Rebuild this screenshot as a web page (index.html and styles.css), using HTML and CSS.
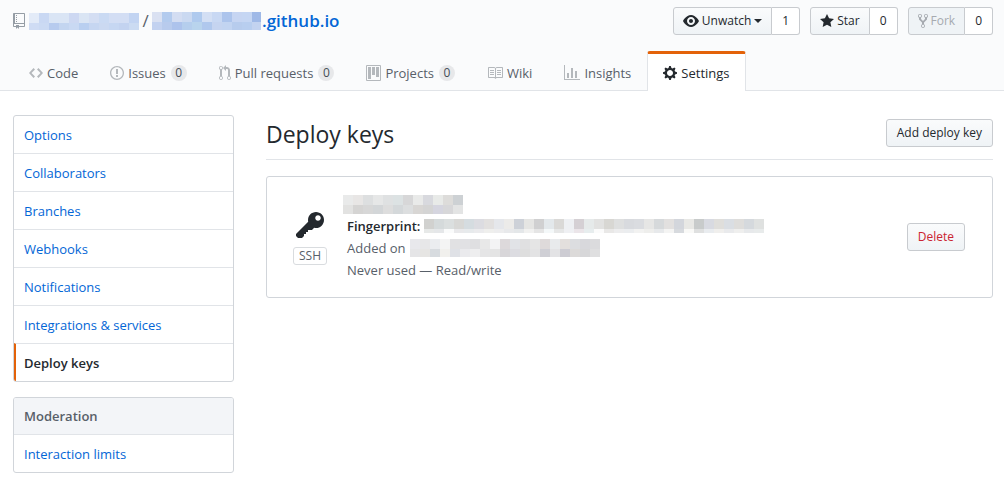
FILE: index.html
```html
<!DOCTYPE html>
<html lang="en">
<head>
<meta charset="utf-8">
<meta name="viewport" content="width=device-width, initial-scale=1">
<title>Deploy keys</title>
<link rel="stylesheet" href="styles.css">
</head>
<body>
<header class="repo-head">
  <div class="repo-bar">
    <h1 class="repo-title">
      <svg class="icon repo-icon" width="12" height="16" viewBox="0 0 12 16"><path fill-rule="evenodd" d="M4 9H3V8h1v1zm0-3H3v1h1V6zm0-2H3v1h1V4zm0-2H3v1h1V2zm8-1v12c0 .55-.45 1-1 1H6v2l-1.5-1.5L3 16v-2H1c-.55 0-1-.45-1-1V1c0-.55.45-1 1-1h10c.55 0 1 .45 1 1zm-1 10H1v2h2v-1h3v1h5v-2zm0-10H2v9h9V1z"/></svg>
      <svg class="mosaic" data-mosaic="owner" width="110" height="17"></svg>
      <span class="slash">/</span>
      <a class="repo-link" href="#"><svg class="mosaic" data-mosaic="repo" width="109" height="18"></svg><span>.github.io</span></a>
    </h1>
    <div class="actions">
      <div class="action">
        <button class="btn" type="button"><svg class="icon" width="16" height="16" viewBox="0 0 16 16"><path fill-rule="evenodd" d="M8.06 2C3 2 0 8 0 8s3 6 8.06 6C13 14 16 8 16 8s-3-6-7.94-6zM8 12c-2.2 0-4-1.78-4-4 0-2.2 1.8-4 4-4 2.22 0 4 1.8 4 4 0 2.22-1.78 4-4 4zm2-4c0 1.11-.89 2-2 2-1.11 0-2-.89-2-2 0-1.11.89-2 2-2 1.11 0 2 .89 2 2z"/></svg>Unwatch<span class="caret"></span></button>
        <a class="count" href="#">1</a>
      </div>
      <div class="action">
        <button class="btn" type="button"><svg class="icon" width="14" height="16" viewBox="0 0 14 16"><path fill-rule="evenodd" d="M14 6l-4.9-.64L7 1 4.9 5.36 0 6l3.6 3.26L2.67 14 7 11.67 11.33 14l-.93-4.74z"/></svg>Star</button>
        <a class="count" href="#">0</a>
      </div>
      <div class="action">
        <button class="btn" type="button" disabled><svg class="icon" width="10" height="16" viewBox="0 0 10 16"><path fill-rule="evenodd" d="M8 1a1.993 1.993 0 0 0-1 3.72V6L5 8 3 6V4.72A1.993 1.993 0 0 0 2 1a1.993 1.993 0 0 0-1 3.72V6.5l3 3v1.78A1.993 1.993 0 0 0 5 15a1.993 1.993 0 0 0 1-3.72V9.5l3-3V4.72A1.993 1.993 0 0 0 8 1zM2 4.2C1.34 4.2.8 3.65.8 3c0-.65.55-1.2 1.2-1.2.65 0 1.2.55 1.2 1.2 0 .65-.55 1.2-1.2 1.2zm3 10c-.66 0-1.2-.55-1.2-1.2 0-.65.55-1.2 1.2-1.2.65 0 1.2.55 1.2 1.2 0 .65-.55 1.2-1.2 1.2zm3-10c-.66 0-1.2-.55-1.2-1.2 0-.65.55-1.2 1.2-1.2.65 0 1.2.55 1.2 1.2 0 .65-.55 1.2-1.2 1.2z"/></svg>Fork</button>
        <a class="count" href="#">0</a>
      </div>
    </div>
  </div>
  <nav class="tabs" aria-label="Repository">
    <a class="tab" href="#"><svg class="icon" width="14" height="16" viewBox="0 0 14 16"><path fill-rule="evenodd" d="M9.5 3L8 4.5 11.5 8 8 11.5 9.5 13 14 8 9.5 3zm-5 0L0 8l4.5 5L6 11.5 2.5 8 6 4.5 4.5 3z"/></svg>Code</a>
    <a class="tab" href="#"><svg class="icon" width="14" height="16" viewBox="0 0 14 16"><path fill-rule="evenodd" d="M7 2.3c3.14 0 5.7 2.56 5.7 5.7s-2.56 5.7-5.7 5.7A5.71 5.71 0 0 1 1.3 8c0-3.14 2.56-5.7 5.7-5.7zM7 1C3.14 1 0 4.14 0 8s3.14 7 7 7 7-3.14 7-7-3.14-7-7-7zm1 3H6v5h2V4zm0 6H6v2h2v-2z"/></svg>Issues<span class="badge">0</span></a>
    <a class="tab" href="#"><svg class="icon" width="12" height="16" viewBox="0 0 12 16"><path fill-rule="evenodd" d="M11 11.28V5c-.03-.78-.34-1.47-.94-2.06C9.46 2.35 8.78 2.03 8 2H7V0L4 3l3 3V4h1c.27.02.48.11.69.31.21.2.3.42.31.69v6.28A1.993 1.993 0 0 0 10 15a1.993 1.993 0 0 0 1-3.72zm-1 2.92c-.66 0-1.2-.55-1.2-1.2 0-.65.55-1.2 1.2-1.2.65 0 1.2.55 1.2 1.2 0 .65-.55 1.2-1.2 1.2zM4 3c0-1.11-.89-2-2-2a1.993 1.993 0 0 0-1 3.72v6.56A1.993 1.993 0 0 0 2 15a1.993 1.993 0 0 0 1-3.72V4.72c.59-.34 1-.98 1-1.72zm-.8 10c0 .66-.55 1.2-1.2 1.2-.65 0-1.2-.55-1.2-1.2 0-.65.55-1.2 1.2-1.2.65 0 1.2.55 1.2 1.2zM2 4.2C1.34 4.2.8 3.65.8 3c0-.65.55-1.2 1.2-1.2.65 0 1.2.55 1.2 1.2 0 .65-.55 1.2-1.2 1.2z"/></svg>Pull requests<span class="badge">0</span></a>
    <a class="tab" href="#"><svg class="icon" width="15" height="16" viewBox="0 0 15 16"><path fill-rule="evenodd" d="M10 12h3V2h-3v10zm-4-2h3V2H6v8zm-4 4h3V2H2v12zm-1 1h13V1H1v14zM14 0H1a1 1 0 0 0-1 1v14a1 1 0 0 0 1 1h13a1 1 0 0 0 1-1V1a1 1 0 0 0-1-1z"/></svg>Projects<span class="badge">0</span></a>
    <a class="tab" href="#"><svg class="icon" width="16" height="16" viewBox="0 0 16 16"><path fill-rule="evenodd" d="M3 5h4v1H3V5zm0 3h4V7H3v1zm0 2h4V9H3v1zm11-5h-4v1h4V5zm0 2h-4v1h4V7zm0 2h-4v1h4V9zm2-6v9c0 .55-.45 1-1 1H9.5l-1 1-1-1H2c-.55 0-1-.45-1-1V3c0-.55.45-1 1-1h5.5l1 1 1-1H15c.55 0 1 .45 1 1zm-8 .5L7.5 3H2v9h6V3.5zm7-.5H9.5l-.5.5V12h6V3z"/></svg>Wiki</a>
    <a class="tab" href="#"><svg class="icon" width="16" height="16" viewBox="0 0 16 16"><path fill-rule="evenodd" d="M16 14v1H0V0h1v14h15zM5 13H3V8h2v5zm4 0H7V3h2v10zm4 0h-2V6h2v7z"/></svg>Insights</a>
    <a class="tab selected" href="#" aria-current="page"><svg class="icon" width="14" height="16" viewBox="0 0 14 16"><path fill-rule="evenodd" d="M14 8.77v-1.6l-1.94-.64-.45-1.09.88-1.84-1.13-1.13-1.81.91-1.09-.45-.69-1.92h-1.6l-.63 1.94-1.11.45-1.84-.88-1.13 1.13.91 1.81-.45 1.09L0 7.23v1.59l1.94.64.45 1.09-.88 1.84 1.13 1.13 1.81-.91 1.09.45.69 1.92h1.59l.63-1.94 1.11-.45 1.84.88 1.13-1.13-.92-1.81.47-1.09L14 8.75v.02zM7 11c-1.66 0-3-1.34-3-3s1.34-3 3-3 3 1.34 3 3-1.34 3-3 3z"/></svg>Settings</a>
  </nav>
</header>
<div class="page">
  <aside class="sidebar">
    <nav class="menu" aria-label="Settings">
      <a class="menu-item" href="#">Options</a>
      <a class="menu-item" href="#">Collaborators</a>
      <a class="menu-item" href="#">Branches</a>
      <a class="menu-item" href="#">Webhooks</a>
      <a class="menu-item" href="#">Notifications</a>
      <a class="menu-item" href="#">Integrations &amp; services</a>
      <a class="menu-item current" href="#" aria-current="page">Deploy keys</a>
    </nav>
    <nav class="menu" aria-label="Moderation">
      <h3 class="menu-heading">Moderation</h3>
      <a class="menu-item" href="#">Interaction limits</a>
    </nav>
  </aside>
  <main class="content">
    <div class="subhead">
      <h2 class="subhead-title">Deploy keys</h2>
      <button class="btn" type="button">Add deploy key</button>
    </div>
    <section class="key-card">
      <div class="key-type">
        <svg class="icon" width="28" height="32" viewBox="0 0 14 16"><path fill-rule="evenodd" d="M12.83 2.17C12.08 1.42 11.14 1.03 10 1c-1.13.03-2.08.42-2.83 1.17S6.04 3.86 6.01 5c0 .3.03.59.09.89L0 12v1l1 1h2l1-1v-1h1v-1h1v-1h2l1.09-1.11c.3.08.59.11.91.11 1.14-.03 2.08-.42 2.83-1.17S13.97 6.14 14 5c-.03-1.14-.42-2.08-1.17-2.83zM11 5.38c-.77 0-1.38-.61-1.38-1.38 0-.77.61-1.38 1.38-1.38.77 0 1.38.61 1.38 1.38 0 .77-.61 1.38-1.38 1.38z"/></svg>
        <span class="ssh">SSH</span>
      </div>
      <div class="key-info">
        <div class="key-name"><svg class="mosaic" data-mosaic="name" width="120" height="19"></svg></div>
        <div class="key-line strong">Fingerprint: <svg class="mosaic" data-mosaic="fingerprint" width="340" height="14"></svg></div>
        <div class="key-line">Added on <svg class="mosaic" data-mosaic="date" width="190" height="18"></svg></div>
        <div class="key-line">Never used — Read/write</div>
      </div>
      <button class="btn danger" type="button">Delete</button>
    </section>
  </main>
</div>
<script src="mosaic.js"></script>
</body>
</html>
```
FILE: styles.css
```css
* { box-sizing: border-box; }
body {
  margin: 0;
  background: #fff;
  color: #24292e;
  font-family: "Open Sans", "Noto Sans", sans-serif;
  font-size: 13px;
  line-height: 20px;
}
a { color: #0366d6; text-decoration: none; }
h1, h2, h3 { margin: 0; }
.icon { display: block; flex: none; fill: currentColor; }
.mosaic { display: block; flex: none; }

.repo-head {
  padding: 7px 11px 0 13px;
  background: #fafbfc;
  border-bottom: 1px solid #e1e4e8;
}
.repo-bar { display: flex; justify-content: space-between; height: 44px; }
.repo-title { display: flex; align-items: center; height: 28px; font-size: 17px; font-weight: 400; }
.repo-icon { margin-right: 4px; color: #959da5; }
.slash { width: 13px; text-align: center; color: #586069; }
.repo-link { display: flex; align-items: center; gap: 1px; font-weight: 600; }

.actions { display: flex; gap: 10px; }
.action { display: flex; height: 28px; }
.btn {
  display: flex;
  align-items: center;
  gap: 4px;
  height: 28px;
  padding: 0 10px;
  border: 1px solid #c8cbcf;
  border-radius: 3px;
  background: linear-gradient(#fafbfc, #eff3f6);
  color: #24292e;
  font: 500 12px/20px "Open Sans", "Noto Sans", sans-serif;
  white-space: nowrap;
}
.btn:disabled { color: #a6aab0; background: #eff3f6; }
.btn.danger { color: #cb2431; }
.action .btn { gap: 3px; padding: 0 9px; border-radius: 3px 0 0 3px; }
.count {
  padding: 0 10px;
  border: 1px solid #c8cbcf;
  border-left: 0;
  border-radius: 0 3px 3px 0;
  background: #fff;
  color: #24292e;
  font-size: 12px;
  font-weight: 500;
  line-height: 26px;
}
.caret { border: 4px solid transparent; border-top-color: currentColor; border-bottom: 0; }

.tabs { display: flex; margin-bottom: -1px; }
.tab {
  display: flex;
  align-items: center;
  gap: 4px;
  height: 40px;
  padding: 3px 15px 0;
  border: 1px solid transparent;
  border-top: 0;
  border-bottom: 0;
  color: #586069;
  white-space: nowrap;
}
.tab .icon { color: #b4b8bc; }
.badge {
  min-width: 16px;
  margin-left: 1px;
  border-radius: 8px;
  background: #e7e8ea;
  color: #444d56;
  font-size: 12px;
  font-weight: 500;
  line-height: 16px;
  text-align: center;
}
.tab.selected {
  padding-top: 0;
  border-color: #e1e4e8;
  border-top: 3px solid #e36209;
  border-radius: 3px 3px 0 0;
  background: #fff;
  color: #24292e;
}
.tab.selected .icon { color: #24292e; }

.page { display: flex; gap: 32px; padding: 24px 11px 15px 13px; }
.sidebar { flex: none; width: 221px; }
.menu {
  margin-bottom: 15px;
  border: 1px solid #d1d5da;
  border-radius: 3px;
  overflow: hidden;
}
.menu-item, .menu-heading {
  display: block;
  padding: 9px 10px 8px;
  font-size: 13px;
  line-height: 20px;
}
.menu-item + .menu-item, .menu-heading + .menu-item { border-top: 1px solid #e1e4e8; }
.menu-heading { padding: 8px 10px; background: #f3f5f8; color: #586069; font-weight: 600; }
.menu-item.current { padding-left: 8px; border-left: 2px solid #e36209; color: #24292e; font-weight: 600; }

.content { flex: 1; min-width: 0; }
.subhead {
  display: flex;
  justify-content: space-between;
  padding: 4px 0 10px;
  margin-bottom: 16px;
  border-bottom: 1px solid #e1e4e8;
}
.subhead-title { font-size: 23px; font-weight: 400; line-height: 30px; }
.key-card {
  display: flex;
  align-items: center;
  padding: 16px 27px 16px 26px;
  border: 1px solid #d1d5da;
  border-radius: 3px;
}
.key-type { display: flex; flex-direction: column; align-items: center; width: 34px; gap: 5px; }
.ssh {
  width: 34px;
  border: 1px solid #d9dcdf;
  border-radius: 3px;
  color: #586069;
  font-size: 12px;
  line-height: 16px;
  text-align: center;
}
.key-info { flex: 1; min-width: 0; margin-left: 16px; }
.key-name { padding: 2px 0 1px; }
.key-line { display: flex; align-items: center; gap: 4px; padding-left: 4px; color: #586069; line-height: 22px; white-space: nowrap; }
.key-line.strong { color: #24292e; font-weight: 600; }
```
FILE: mosaic.js
```js
// Each mosaic has two rows of 10px wide cells; the second row fills the remaining height.
const mosaics = {
  owner: [
    "e3ebf8 c9d8f3 dae5f5 dae5f5 cdd8f2 dae5f4 d4def3 cadaf3 d3def4 d3def4 c2d4f2",
    "cfdcf4 cbdaf3 b7cbee c3d5f0 c9d9f3 b9cff0 c6d6f1 cbd9f1 c6d7f2 c3d3f0 cbdbf2"
  ],
  repo: [
    "dae1f2 b3cbee d3ddf2 cad9f1 afcaee d3dff4 c8d8f3 acc4ec c6d5f2 c5d6f3 9fb9e7",
    "c3d2f0 b8cbed adc3ec b5ceed b9d4ed b0c8ed c5d4f0 c2d4f1 b7cced b8ceef c3d3f0"
  ],
  name: [
    "e9eaea e8e6e5 dddfe0 e6e7e7 dfe1e2 dce2e3 d7d7d8 e9eae9 d8d9de e8eae8 dddcda cdd1d4",
    "e2e2e1 d5d4d3 d7d7d7 d3d6d8 dddddd d4d8da dcdedf d8d6d4 d4d4d4 d5d5df d7d7d9 e3e4e4"
  ],
  fingerprint: [
    "d1d1cf d5dadb dbdfdf d8d8d6 d5dce0 dcdce1 e2e0df e5e7eb ecebe9 cdd1d8 e5e5e3 d0d0d1 e3e8eb dad9d7 eef0f3 d5d0d4 e6eaea e2e2e1 d8d7d3 dedfdf d8dade dadce0 e6e6e5 d6d9db e2e0df d3d6dc e8e8e5 c8cbcb d8dae1 dfdedb dadee3 dedddb d5d9dd dfe1e0",
    "e7e9e8 e5e7e9 fafbfb e9e9eb e7eaec ebebed efefed ededee e8e9eb e4e7e9 f1f1f0 e5e5e5 f4f8f9 e6e7e7 eff0f3 ebe5e9 e7edee fbfbfb e9e8e7 ededee ebedef f2f2f1 eeeeec e7e9eb f4f4f3 d7dade f9f9f7 dfe0e0 e9ecef f0efed e9eaec efefee e7e9eb e8ebeb"
  ],
  date: [
    "e8e8ec e7e7e8 ebedf0 f4f4f4 e1e1e3 e1e1e4 dfdfe1 e8e8e8 f3f3f4 ddd9db e1e3e7 e0e0e1 e5e5e5 dedada e8eaec e3dfdd dcdde0 d8d8dc dbdbdd",
    "e5e5e7 e6e5e3 d7dbdf f1f0ed dfe1e6 eaeaed eeeeef e5e5e6 e4e4e4 d8d6d9 dcdce1 dedede e3e3e4 cfcfd5 e3e3e5 cdccd3 dcdad9 d7d7d9 dfdfe0"
  ]
};

document.querySelectorAll("[data-mosaic]").forEach((svg) => {
  const height = svg.height.baseVal.value;
  mosaics[svg.dataset.mosaic].forEach((row, r) => {
    row.split(" ").forEach((color, c) => {
      const cell = document.createElementNS("http://www.w3.org/2000/svg", "rect");
      cell.setAttribute("x", c * 10);
      cell.setAttribute("y", r * 10);
      cell.setAttribute("width", 10);
      cell.setAttribute("height", r ? height - 10 : 10);
      cell.setAttribute("fill", "#" + color);
      svg.append(cell);
    });
  });
});
```
